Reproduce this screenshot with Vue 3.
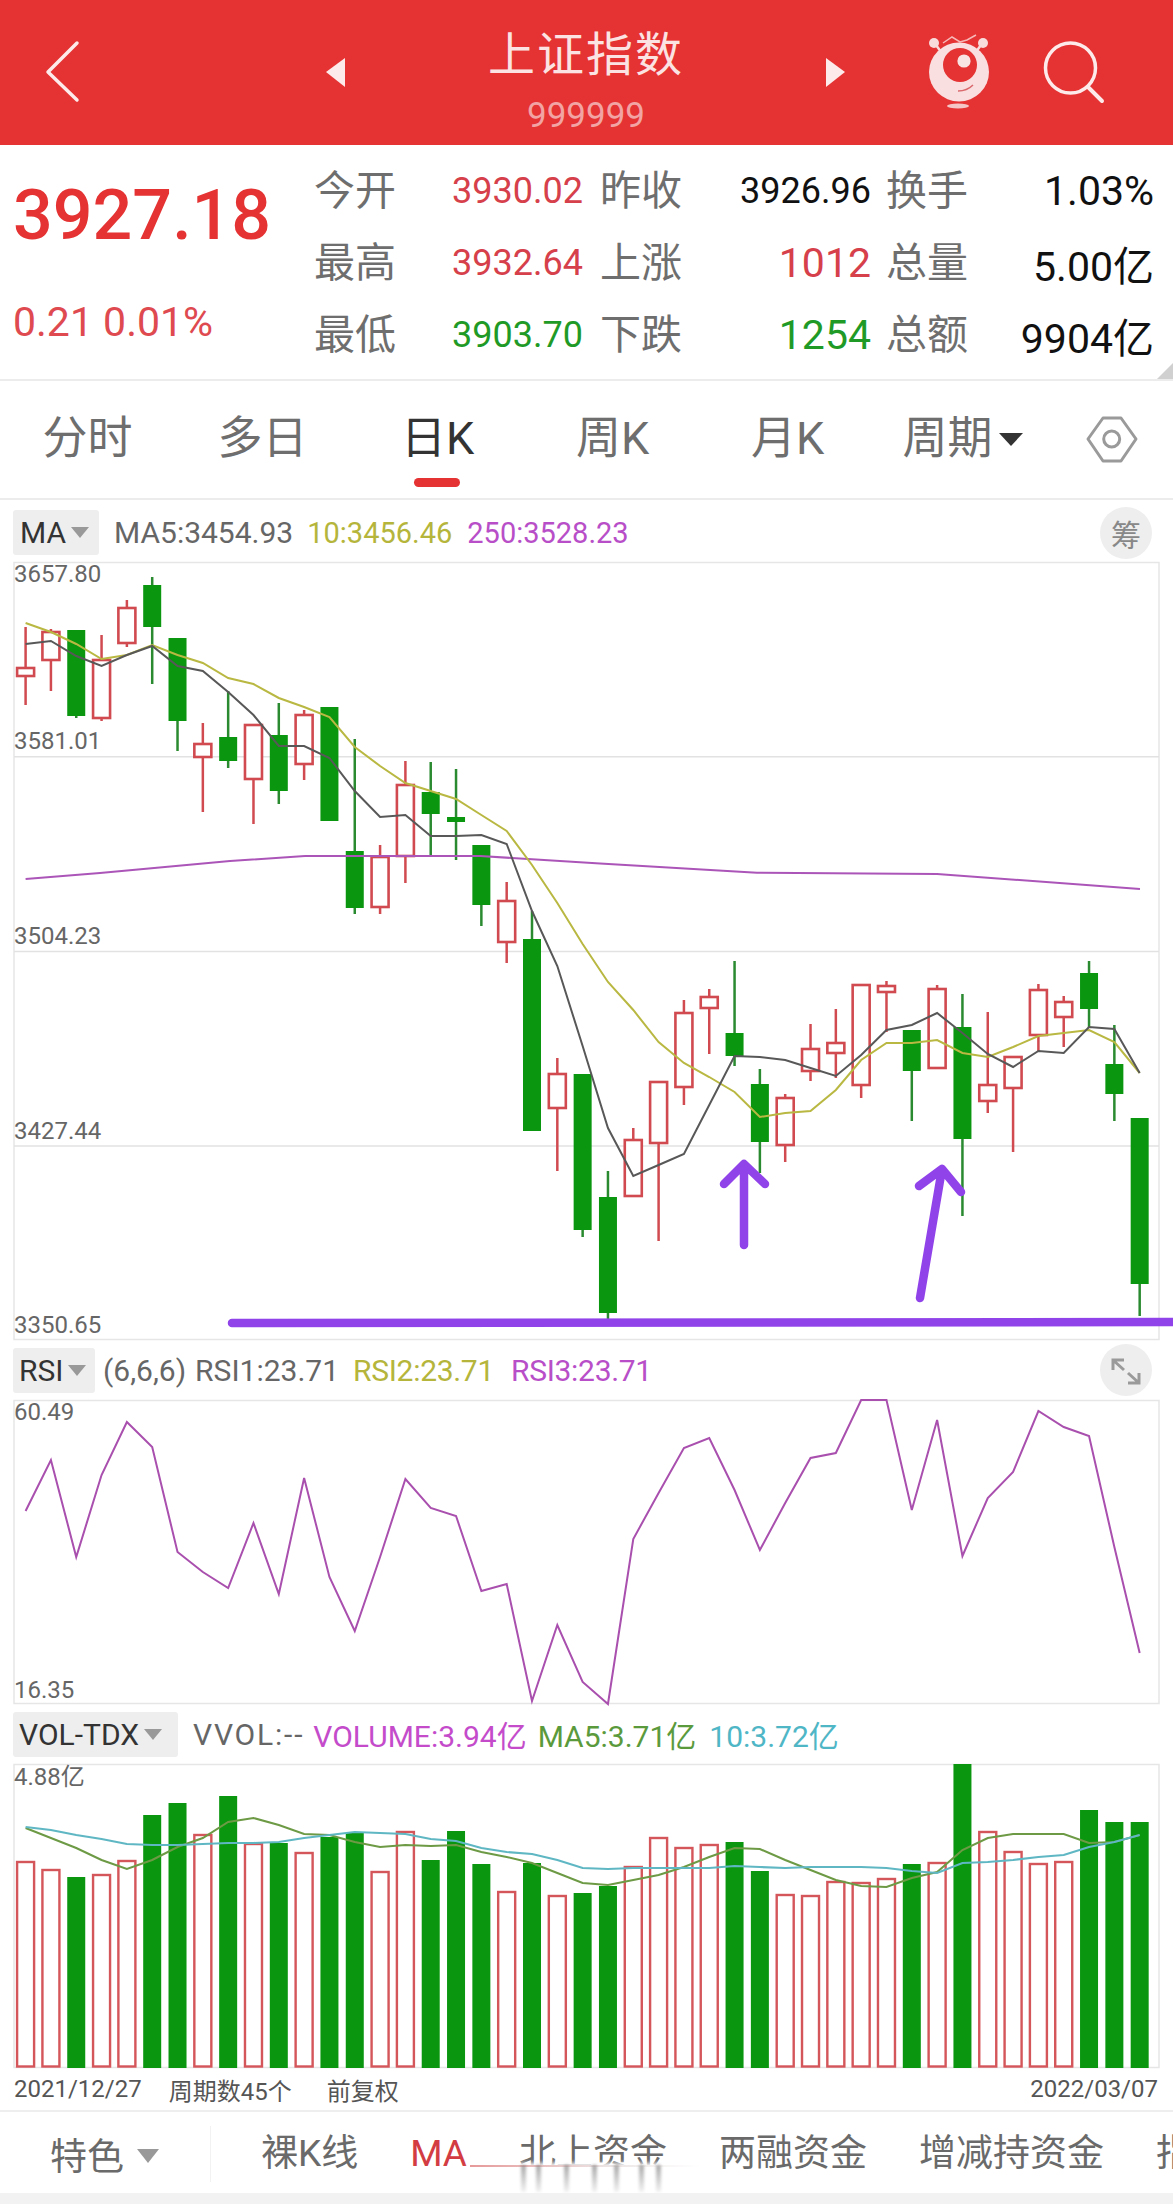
<template>
  <div class="page">
    <!-- 顶部标题栏 -->
    <header class="topbar">
      <svg class="back" width="50" height="145" viewBox="40 0 50 145">
        <path d="M77 43 L48 72 L77 100" fill="none" stroke="#fdeaea" stroke-width="3.5" stroke-linecap="round" stroke-linejoin="round" />
      </svg>
      <div class="title-wrap">
        <svg class="tri" width="24" height="145" viewBox="324 0 24 145"><path d="M345 58 L326 72 L345 87 Z" fill="#fdeaea" /></svg>
        <div class="title-col">
          <div class="title">上证指数</div>
          <div class="code">999999</div>
        </div>
        <svg class="tri" width="24" height="145" viewBox="824 0 24 145"><path d="M826 58 L845 72 L826 87 Z" fill="#fdeaea" /></svg>
      </div>
      <svg class="mascot" width="70" height="145" viewBox="925 0 70 145">
        <path d="M943 43 L952 37 L960 42 L967 40 L976 35" fill="none" stroke="#f7b7b7" stroke-width="1.5" />
        <path d="M936 45 L944 56 M981 45 L973 56" stroke="#f8dcdc" stroke-width="2.5" />
        <circle cx="934" cy="43" r="5" fill="#f8dcdc" />
        <circle cx="983" cy="43" r="5" fill="#f8dcdc" />
        <ellipse cx="959" cy="72" rx="30" ry="29.5" fill="#f9dfdf" />
        <circle cx="960" cy="65" r="17" fill="#e53232" />
        <circle cx="964" cy="61" r="6.6" fill="#f9e4e4" />
        <path d="M958 91 Q967 91 973 85" fill="none" stroke="#d9686c" stroke-width="1.5" />
        <ellipse cx="958" cy="106" rx="11" ry="2.6" fill="#f5c6c6" />
      </svg>
      <svg class="search" width="70" height="145" viewBox="1040 0 70 145">
        <circle cx="1070.5" cy="68" r="25" fill="none" stroke="#fdeaea" stroke-width="3.5" />
        <path d="M1088 87 L1102 101" stroke="#fdeaea" stroke-width="4" stroke-linecap="round" />
      </svg>
    </header>

    <!-- 行情数据 -->
    <section class="quote">
      <div class="price-col">
        <div class="price">3927.18</div>
        <div class="change">0.21 0.01%</div>
      </div>
      <div class="stats">
        <template v-for="(s, i) in stats" :key="i">
          <span class="label">{{ s.label }}</span>
          <span class="val" :class="[s.color, { big: s.big }]">{{ s.value }}</span>
        </template>
      </div>
      <i class="corner"></i>
    </section>

    <!-- 周期切换 -->
    <nav class="tabs">
      <div v-for="t in tabs" :key="t" class="tab" :class="{ active: t === '日K' }">{{ t }}</div>
      <div class="tab">周期<i class="caret-dark"></i></div>
      <div class="tab">
        <svg width="52" height="48" viewBox="1085 414 52 48">
          <path d="M1087 438 L1102 417 L1120 417 L1135 438 L1120 460 L1102 460 Z" fill="none" stroke="#9a9a9a" stroke-width="3" stroke-linejoin="round" />
          <circle cx="1110.7" cy="438" r="8" fill="none" stroke="#9a9a9a" stroke-width="3" />
        </svg>
      </div>
    </nav>

    <!-- K线 -->
    <div class="panel-head head-ma">
      <div class="drop drop-ma">MA<i class="caret"></i></div>
      <span class="lg c-gray first">MA5:3454.93</span>
      <span class="lg c-yellow narrow ten">10:3456.46</span>
      <span class="lg c-purple narrow">250:3528.23</span>
      <div class="round-btn chou">筹</div>
    </div>
    <svg class="chart" width="1173" height="778" viewBox="0 562 1173 778">
      <rect x="14" y="562.5" width="1145" height="777" fill="#fff" stroke="#e6e6e6" stroke-width="1.5" />
      <line v-for="y in [756.7, 951.5, 1146]" :key="y" x1="14" x2="1159" :y1="y" :y2="y" stroke="#e2e2e2" stroke-width="1.5" />
      <g v-for="(c, i) in candles" :key="i">
        <template v-if="c[0] === 'g'">
          <line :x1="kx(i)" :x2="kx(i)" :y1="c[1]" :y2="c[4]" stroke="#2a8a30" stroke-width="2.5" />
          <rect :x="kx(i) - 9" :y="c[2]" width="18" :height="c[3] - c[2]" fill="#0a960f" />
        </template>
        <template v-else>
          <line :x1="kx(i)" :x2="kx(i)" :y1="c[1]" :y2="c[2]" stroke="#d04a50" stroke-width="2.5" />
          <line :x1="kx(i)" :x2="kx(i)" :y1="c[3]" :y2="c[4]" stroke="#d04a50" stroke-width="2.5" />
          <rect :x="kx(i) - 8.5" :y="c[2]" width="17" :height="c[3] - c[2]" fill="#fff" stroke="#d04a50" stroke-width="2.6" />
        </template>
      </g>
      <polyline :points="ma250" fill="none" stroke="#ab55b8" stroke-width="2" />
      <polyline :points="toPoints(ma10)" fill="none" stroke="#b9b842" stroke-width="2" />
      <polyline :points="toPoints(ma5)" fill="none" stroke="#585858" stroke-width="2" />
      <text v-for="a in mainAxis" :key="a.t" x="14" :y="a.y" class="axis">{{ a.t }}</text>
      <!-- 手绘标注 -->
      <g fill="none" stroke="#9143ea" stroke-width="8.5" stroke-linecap="round" stroke-linejoin="round">
        <path d="M232 1323 L1173 1322" />
        <path d="M744 1164 L744 1245 M724 1184 L744 1164 L765 1184" />
        <path d="M920 1298 L942 1169 M919 1186 L942 1169 L961 1192" />
      </g>
    </svg>

    <!-- RSI -->
    <div class="panel-head head-rsi">
      <div class="drop drop-rsi">RSI<i class="caret"></i></div>
      <span class="lg c-gray">(6,6,6)</span>
      <span class="lg c-gray rsi1">RSI1:23.71</span>
      <span class="lg c-yellow tight rsi2">RSI2:23.71</span>
      <span class="lg c-purple tight">RSI3:23.71</span>
      <div class="round-btn">
        <svg width="52" height="52" viewBox="1100 1343 52 52">
          <path d="M1113 1359 L1124 1369 M1113 1369 L1113 1359 L1124 1359 M1128 1372 L1139 1382 M1139 1372 L1139 1382 L1128 1382" fill="none" stroke="#9a9a9a" stroke-width="3" />
        </svg>
      </div>
    </div>
    <svg class="chart" width="1173" height="304" viewBox="0 1400 1173 304">
      <rect x="14" y="1400.5" width="1145" height="303" fill="#fff" stroke="#e6e6e6" stroke-width="1.5" />
      <polyline :points="toPoints(rsi)" fill="none" stroke="#a94fae" stroke-width="2" />
      <text x="14" y="1412" class="axis">60.49</text>
      <text x="14" y="1690" class="axis">16.35</text>
    </svg>

    <!-- 成交量 -->
    <div class="panel-head head-vol">
      <div class="drop drop-vol">VOL-TDX<i class="caret"></i></div>
      <span class="lg c-gray first vvol">VVOL:--</span>
      <span class="lg c-magenta v1">VOLUME:3.94亿</span>
      <span class="lg c-green v2">MA5:3.71亿</span>
      <span class="lg c-teal v3">10:3.72亿</span>
    </div>
    <svg class="chart" width="1173" height="304" viewBox="0 1764 1173 304">
      <rect x="14" y="1764.5" width="1145" height="303" fill="#fff" stroke="#e6e6e6" stroke-width="1.5" />
      <g v-for="(b, i) in bars" :key="i">
        <rect v-if="b[0] === 'g'" :x="kx(i) - 9" :y="b[1]" width="18" :height="2068 - b[1]" fill="#0a960f" />
        <rect v-else :x="kx(i) - 8.5" :y="b[1]" width="17" :height="2066.5 - b[1]" fill="#fff" stroke="#d4555a" stroke-width="2.4" />
      </g>
      <polyline :points="toPoints(volMa5)" fill="none" stroke="#6d9a45" stroke-width="2" />
      <polyline :points="toPoints(volMa10)" fill="none" stroke="#5fb7c4" stroke-width="2.2" />
      <text x="14" y="1777" class="axis">4.88亿</text>
    </svg>
    <div class="dates">
      <span>2021/12/27</span>
      <span class="cycle">周期数45个</span>
      <span class="adj">前复权</span>
      <span class="end">2022/03/07</span>
    </div>

    <!-- 底部指标栏 -->
    <footer class="bottom">
      <div class="feature">特色<i class="caret big"></i></div>
      <div class="items">
        <span v-for="n in navItems" :key="n" :class="{ on: n === 'MA' }">{{ n }}</span>
      </div>
      <div class="smudge">
        <i class="smear-red"></i>
        <i v-for="x in smears" :key="x" class="smear" :style="{ left: x + 'px' }"></i>
      </div>
    </footer>
    <div class="strip"></div>
  </div>
</template>

<script setup>
const stats = [
  { label: "今开", value: "3930.02", color: "red" },
  { label: "昨收", value: "3926.96", color: "black" },
  { label: "换手", value: "1.03%", color: "black", big: true },
  { label: "最高", value: "3932.64", color: "red" },
  { label: "上涨", value: "1012", color: "red", big: true },
  { label: "总量", value: "5.00亿", color: "black", big: true },
  { label: "最低", value: "3903.70", color: "green" },
  { label: "下跌", value: "1254", color: "green", big: true },
  { label: "总额", value: "9904亿", color: "black", big: true },
];
const tabs = ["分时", "多日", "日K", "周K", "月K"];
const navItems = ["裸K线", "MA", "北上资金", "两融资金", "增减持资金", "指标"];
const smears = [51, 66, 94, 122, 144, 169, 186];

const kx = (i) => 25.6 + i * 25.32;
const toPoints = (ys) => ys.map((y, i) => `${kx(i)},${y}`).join(" ");

// [涨跌, 最高, 实体上沿, 实体下沿, 最低] 单位是页面像素
const candles = [
  ["r", 627, 668, 676, 705], ["r", 629, 632, 660, 691], ["g", 630, 630, 716, 718], ["r", 635, 660, 718, 721],
  ["r", 600, 608, 643, 647], ["g", 577, 585, 627, 684], ["g", 638, 638, 721, 751], ["r", 723, 744, 757, 812],
  ["g", 691, 737, 761, 768], ["r", 725, 725, 779, 824], ["g", 703, 735, 791, 804], ["r", 710, 715, 764, 780],
  ["g", 707, 707, 821, 821], ["g", 739, 851, 908, 914], ["r", 845, 857, 907, 914], ["r", 761, 785, 856, 883],
  ["g", 762, 792, 814, 857], ["g", 769, 817, 822, 860], ["g", 845, 845, 905, 926], ["r", 882, 901, 942, 963],
  ["g", 911, 939, 1131, 1131], ["r", 1058, 1074, 1108, 1171], ["g", 1074, 1074, 1230, 1237], ["g", 1171, 1197, 1313, 1320],
  ["r", 1128, 1140, 1196, 1196], ["r", 1082, 1082, 1143, 1241], ["r", 1000, 1013, 1087, 1105], ["r", 989, 997, 1008, 1054],
  ["g", 961, 1033, 1056, 1066], ["g", 1069, 1084, 1142, 1173], ["r", 1094, 1098, 1145, 1162], ["r", 1024, 1049, 1071, 1081],
  ["r", 1009, 1043, 1053, 1078], ["r", 985, 985, 1085, 1098], ["r", 981, 986, 992, 1032], ["g", 1030, 1030, 1071, 1121],
  ["r", 985, 989, 1068, 1068], ["g", 994, 1027, 1139, 1216], ["r", 1012, 1085, 1101, 1113], ["r", 1057, 1057, 1088, 1152],
  ["r", 984, 990, 1035, 1052], ["r", 996, 1002, 1017, 1047], ["g", 961, 973, 1009, 1028], ["g", 1025, 1064, 1094, 1121],
  ["g", 1118, 1118, 1284, 1316],
];

const ma5 = [644, 641, 656, 666, 655, 646, 666, 671, 692, 715, 746, 746, 758, 791, 817, 815, 836, 836, 835, 844, 911, 966, 1046, 1128, 1176, 1165, 1154, 1105, 1056, 1057, 1060, 1068, 1076, 1055, 1030, 1025, 1013, 1033, 1054, 1067, 1051, 1053, 1027, 1029, 1073];
const ma10 = [623, 632, 644, 659, 655, 645, 655, 663, 678, 684, 698, 707, 717, 747, 766, 783, 791, 799, 815, 831, 865, 903, 944, 982, 1010, 1042, 1063, 1077, 1092, 1117, 1113, 1111, 1090, 1060, 1043, 1043, 1040, 1053, 1057, 1047, 1036, 1033, 1030, 1042, 1073];
const ma250 = "25.6,879 100,873 230,861 305,856 480,856 600,863.5 757,872.7 937,874 1140,889";

const mainAxis = [
  { t: "3657.80", y: 574 },
  { t: "3581.01", y: 741 },
  { t: "3504.23", y: 936 },
  { t: "3427.44", y: 1131 },
  { t: "3350.65", y: 1325 },
];

const rsi = [1511, 1460, 1557, 1475, 1422, 1447, 1552, 1572, 1588, 1523, 1594, 1478, 1577, 1631, 1557, 1479, 1508, 1516, 1591, 1584, 1701, 1625, 1682, 1704, 1539, 1493, 1448, 1438, 1490, 1550, 1503, 1458, 1453, 1400, 1400, 1510, 1420, 1556, 1498, 1472, 1411, 1427, 1436, 1547, 1653];

const barTops = [1862, 1870, 1877, 1875, 1861, 1815, 1803, 1835, 1796, 1844, 1843, 1853, 1837, 1833, 1872, 1832, 1860, 1831, 1864, 1892, 1863, 1896, 1893, 1886, 1867, 1838, 1848, 1845, 1842, 1871, 1895, 1896, 1882, 1883, 1879, 1864, 1863, 1764, 1832, 1852, 1864, 1862, 1810, 1822, 1822];
const greenBars = [2, 5, 6, 8, 10, 12, 13, 16, 17, 18, 20, 22, 23, 28, 29, 35, 37, 42, 43, 44];
const bars = barTops.map((y, i) => [greenBars.includes(i) ? "g" : "r", y]);

const volMa5 = [1828, 1838, 1848, 1860, 1869, 1860, 1847, 1838, 1822, 1818, 1825, 1834, 1835, 1842, 1847, 1845, 1846, 1845, 1852, 1857, 1863, 1873, 1883, 1885, 1880, 1875, 1867, 1857, 1848, 1849, 1860, 1870, 1880, 1886, 1887, 1878, 1872, 1850, 1838, 1834, 1834, 1834, 1843, 1842, 1835];
const volMa10 = [1827, 1830, 1835, 1839, 1844, 1845, 1845, 1844, 1843, 1843, 1842, 1838, 1835, 1832, 1833, 1834, 1839, 1841, 1848, 1852, 1854, 1860, 1868, 1869, 1868, 1868, 1868, 1868, 1866, 1867, 1868, 1867, 1867, 1867, 1868, 1871, 1873, 1863, 1862, 1860, 1857, 1855, 1847, 1842, 1835];
</script>

<style>
body {
  background: #fff;
}
</style>

<style scoped>
.page {
  width: 1173px;
  height: 2204px;
  overflow: hidden;
  background: #fff;
  font-family: Roboto, "Noto Sans CJK SC", sans-serif;
  color: #666;
}
i {
  display: inline-block;
  font-style: normal;
}
svg {
  display: block;
  flex: none;
}
.chart {
  overflow: visible;
}

.topbar {
  height: 145px;
  background: #e53232;
  display: flex;
  padding-left: 40px;
  box-sizing: border-box;
}
.title-wrap {
  width: 524px;
  margin-left: 234px;
  display: flex;
  justify-content: space-between;
}
.title-col {
  text-align: center;
  padding-top: 29px;
}
.title {
  font-size: 47px;
  line-height: 52px;
  color: #fbe3e3;
  letter-spacing: 2px;
}
.code {
  font-size: 35px;
  line-height: 36px;
  margin-top: 17px;
  color: #f2a3a3;
}
.mascot {
  margin-left: 77px;
}
.search {
  margin-left: 45px;
}

.quote {
  position: relative;
  height: 234px;
  display: flex;
}
.price-col {
  width: 314px;
  padding: 34px 0 0 13px;
  box-sizing: border-box;
  flex: none;
}
.price {
  font-size: 70px;
  line-height: 72px;
  font-weight: 500;
  color: #e53232;
}
.change {
  font-size: 41px;
  line-height: 44px;
  margin-top: 49px;
  color: #de4a50;
}
.stats {
  display: grid;
  grid-template-columns: 82px 187px 99px 189px 97px 186px;
  grid-auto-rows: 72px;
  padding-top: 10px;
  align-items: center;
}
.label {
  font-size: 41px;
  line-height: 50px;
  color: #6e6e6e;
  text-align: right;
  margin-bottom: 1px;
  white-space: nowrap;
}
.val {
  font-size: 36px;
  text-align: right;
}
.val.big {
  font-size: 41px;
}
.val.red {
  color: #d6404a;
}
.val.green {
  color: #1f9a26;
}
.val.black {
  color: #111;
}
.corner {
  position: absolute;
  right: 0;
  bottom: 0;
  border-style: solid;
  border-width: 0 0 16px 16px;
  border-color: transparent transparent #d0d0d0 transparent;
}

.tabs {
  height: 116px;
  border-top: 2px solid #ececec;
  border-bottom: 2px solid #ececec;
  display: grid;
  grid-template-columns: repeat(6, 175px) 123px;
  align-items: center;
  padding-bottom: 1px;
  box-sizing: content-box;
}
.tab {
  position: relative;
  font-size: 45px;
  line-height: 60px;
  text-align: center;
  color: #6e6e6e;
  display: flex;
  justify-content: center;
  align-items: center;
}
.tab.active {
  color: #333;
}
.tab.active::after {
  content: "";
  position: absolute;
  left: 64px;
  width: 46px;
  top: 69px;
  height: 9px;
  border-radius: 5px;
  background: #e53232;
}
.caret-dark {
  width: 0;
  height: 0;
  margin-left: 6px;
  border-left: 12px solid transparent;
  border-right: 12px solid transparent;
  border-top: 13px solid #333;
}

.panel-head {
  display: flex;
  align-items: center;
  height: 60px;
  padding: 0 21px 0 13px;
  font-size: 30px;
  white-space: nowrap;
}
.head-ma {
  height: 62px;
  padding-top: 3px;
  box-sizing: border-box;
}
.drop {
  height: 45px;
  background: #eee;
  border-radius: 3px;
  display: flex;
  align-items: center;
  padding-left: 7px;
  box-sizing: border-box;
  color: #333;
  flex: none;
}
.drop-ma {
  width: 86px;
}
.drop-rsi {
  width: 82px;
  padding-left: 6px;
  margin-right: 8px;
}
.drop-vol {
  width: 165px;
  padding-left: 6px;
}
.caret {
  width: 0;
  height: 0;
  margin-left: 5px;
  border-left: 9px solid transparent;
  border-right: 9px solid transparent;
  border-top: 11px solid #999;
}
.lg {
  margin-right: 14px;
}
.first {
  margin-left: 15px;
}
.narrow {
  font-size: 29px;
}
.ten {
  margin-right: 15px;
}
.tight {
  letter-spacing: -0.3px;
}
.rsi1 {
  margin-left: -5px;
}
.rsi2 {
  margin-right: 17px;
}
.vvol {
  letter-spacing: 1.8px;
}
.v1 {
  margin-left: -5px;
  margin-right: 11px;
}
.v2 {
  margin-right: 13px;
}
.c-gray {
  color: #666;
}
.c-yellow {
  color: #b5b53c;
}
.c-purple {
  color: #b84fc8;
}
.c-magenta {
  color: #c44ccb;
}
.c-green {
  color: #5b9a3c;
}
.c-teal {
  color: #4fb6c6;
}
.round-btn {
  width: 52px;
  height: 52px;
  border-radius: 50%;
  background: #eee;
  margin-left: auto;
  display: flex;
  align-items: center;
  justify-content: center;
  flex: none;
}
.chou {
  font-size: 30px;
  color: #888;
}

.axis {
  font-size: 24px;
  fill: #666;
  dominant-baseline: central;
}

.dates {
  height: 42px;
  display: flex;
  align-items: center;
  padding: 0 15px 0 14px;
  font-size: 24px;
  color: #555;
}
.cycle {
  margin-left: 27px;
}
.adj {
  margin-left: 35px;
}
.end {
  margin-left: auto;
}

.bottom {
  position: relative;
  height: 83px;
  border-top: 2px solid #eee;
  padding-top: 3px;
  display: flex;
  align-items: center;
  font-size: 37px;
  color: #6a6a6a;
  overflow: hidden;
  box-sizing: border-box;
}
.feature {
  width: 211px;
  height: 56px;
  flex: none;
  display: flex;
  align-items: center;
  padding-left: 50px;
  box-sizing: border-box;
  border-right: 1px solid #f2f2f2;
}
.caret.big {
  margin-left: 13px;
  margin-top: 4px;
  border-left-width: 11px;
  border-right-width: 11px;
  border-top-width: 14px;
}
.items {
  display: flex;
  align-items: center;
  gap: 52px;
  padding-left: 50px;
  line-height: 52px;
  white-space: nowrap;
}
.items .on {
  color: #d23c42;
}
.smudge {
  position: absolute;
  left: 470px;
  width: 230px;
  top: 53px;
  height: 28px;
  background: #fff;
  box-shadow: 0 0 4px 2px #fff;
}
.smear-red {
  position: absolute;
  left: 0;
  top: 0;
  width: 100%;
  height: 2px;
  background: linear-gradient(to right, rgba(210, 70, 70, 0.55), rgba(180, 150, 150, 0.25) 60%, transparent);
}
.smear {
  position: absolute;
  top: 0;
  width: 5px;
  height: 27px;
  background: linear-gradient(to bottom, rgba(110, 110, 110, 0.6), rgba(190, 190, 190, 0.2));
  filter: blur(1.5px);
}
.strip {
  height: 11px;
  background: #f2f2f2;
}
</style>
